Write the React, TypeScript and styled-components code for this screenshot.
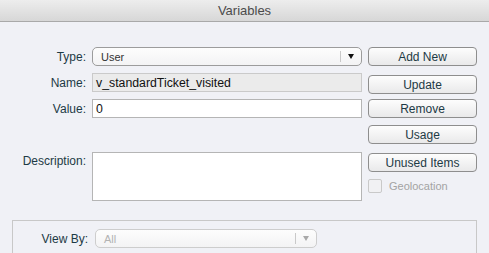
import React from "react";
import styled, { createGlobalStyle } from "styled-components";

const GlobalStyle = createGlobalStyle`
  html, body {
    margin: 0;
    padding: 0;
    background: #f0f1f6;
  }
  body {
    font-family: "Liberation Sans", Arial, sans-serif;
    overflow: hidden;
  }
`;

const Window = styled.div`
  width: 489px;
  height: 253px;
  background: #f0f1f6;
  overflow: hidden;
`;

const TitleBar = styled.div`
  height: 21px;
  border-bottom: 1px solid #a9a9a9;
  background: linear-gradient(#ededed, #d7d7d7);
  display: flex;
  align-items: center;
  justify-content: center;
  font-size: 13px;
  color: #4b4b4b;
`;

const Body = styled.div`
  display: flex;
  padding-top: 25px;
  gap: 6px;
`;

const Form = styled.div`
  display: grid;
  grid-template-columns: 86px 270px;
  column-gap: 6px;
  row-gap: 7px;
  align-items: center;
`;

const Label = styled.div<{ $top?: number }>`
  text-align: right;
  font-size: 12px;
  color: #1d3a45;
  align-self: ${({ $top }) => ($top ? "start" : "center")};
  padding-top: ${({ $top }) => $top ?? 0}px;
`;

const SelectBox = styled.div<{ $disabled?: boolean }>`
  height: 17px;
  border: 1px solid ${({ $disabled }) => ($disabled ? "#cdcdcd" : "#9c9c9c")};
  border-radius: 5px;
  background: linear-gradient(#fdfdfd, #f3f3f4);
  display: flex;
  align-items: center;
  font-size: 11px;
  color: ${({ $disabled }) => ($disabled ? "#b3b3b3" : "#333")};
`;

const SelectText = styled.span`
  flex: 1;
  padding-left: 8px;
`;

const SelectDivider = styled.span`
  width: 1px;
  height: 11px;
  background: #c9c9c9;
`;

const SelectArrow = styled.span<{ $disabled?: boolean }>`
  width: 20px;
  display: flex;
  justify-content: center;
  &::after {
    content: "";
    border-left: 3.5px solid transparent;
    border-right: 3.5px solid transparent;
    border-top: 5px solid ${({ $disabled }) => ($disabled ? "#a9a9a9" : "#111")};
  }
`;

const Input = styled.div<{ $disabled?: boolean; $height?: number; $mt?: number }>`
  height: ${({ $height }) => $height ?? 17}px;
  margin-top: ${({ $mt }) => $mt ?? 0}px;
  border: 1px solid ${({ $disabled }) => ($disabled ? "#cacaca" : "#b5b5b5")};
  background: ${({ $disabled }) => ($disabled ? "#ebebeb" : "#fff")};
  font-size: 12.3px;
  color: #111;
  padding-left: 3px;
  display: flex;
  align-items: ${({ $height }) => ($height ? "flex-start" : "center")};
`;

const Side = styled.div`
  display: flex;
  flex-direction: column;
  width: 109px;
`;

const Button = styled.button<{ $mt?: number }>`
  height: 19px;
  margin-top: ${({ $mt }) => $mt ?? 0}px;
  border: 1px solid #8e8e8e;
  border-radius: 4px;
  background: linear-gradient(#fdfdfd, #e9e9ea);
  font-family: "Liberation Sans", Arial, sans-serif;
  font-size: 12px;
  color: #1d3a45;
  padding: 0;
`;

const CheckRow = styled.label`
  display: flex;
  align-items: center;
  gap: 7px;
  margin-top: 7px;
  font-size: 11px;
  color: #a3a3a3;
`;

const CheckBox = styled.span`
  width: 12px;
  height: 12px;
  border: 1px solid #c9c9c9;
  border-radius: 2px;
  background: #f1f1f3;
`;

const GroupBox = styled.div`
  margin: 19px 0 0 12px;
  width: 465px;
  height: 60px;
  box-sizing: border-box;
  border: 1px solid #c8c8c8;
  padding-top: 8px;
  display: flex;
  align-items: flex-start;
  gap: 7px;
`;

const GroupLabel = styled.div`
  width: 75px;
  padding-top: 3px;
  text-align: right;
  font-size: 12px;
  color: #1d3a45;
`;

const GroupSelect = styled(SelectBox)`
  width: 220px;
`;

export default function App() {
  return (
    <Window>
      <GlobalStyle />
      <TitleBar>Variables</TitleBar>
      <Body>
        <Form>
          <Label>Type:</Label>
          <SelectBox>
            <SelectText>User</SelectText>
            <SelectDivider />
            <SelectArrow />
          </SelectBox>
          <Label>Name:</Label>
          <Input $disabled>v_standardTicket_visited</Input>
          <Label>Value:</Label>
          <Input>0</Input>
          <Label $top={29}>Description:</Label>
          <Input $height={47} $mt={27} />
        </Form>
        <Side>
          <Button>Add New</Button>
          <Button $mt={9}>Update</Button>
          <Button $mt={5}>Remove</Button>
          <Button $mt={7}>Usage</Button>
          <Button $mt={9}>Unused Items</Button>
          <CheckRow>
            <CheckBox />
            Geolocation
          </CheckRow>
        </Side>
      </Body>
      <GroupBox>
        <GroupLabel>View By:</GroupLabel>
        <GroupSelect $disabled>
          <SelectText>All</SelectText>
          <SelectDivider />
          <SelectArrow $disabled />
        </GroupSelect>
      </GroupBox>
    </Window>
  );
}
